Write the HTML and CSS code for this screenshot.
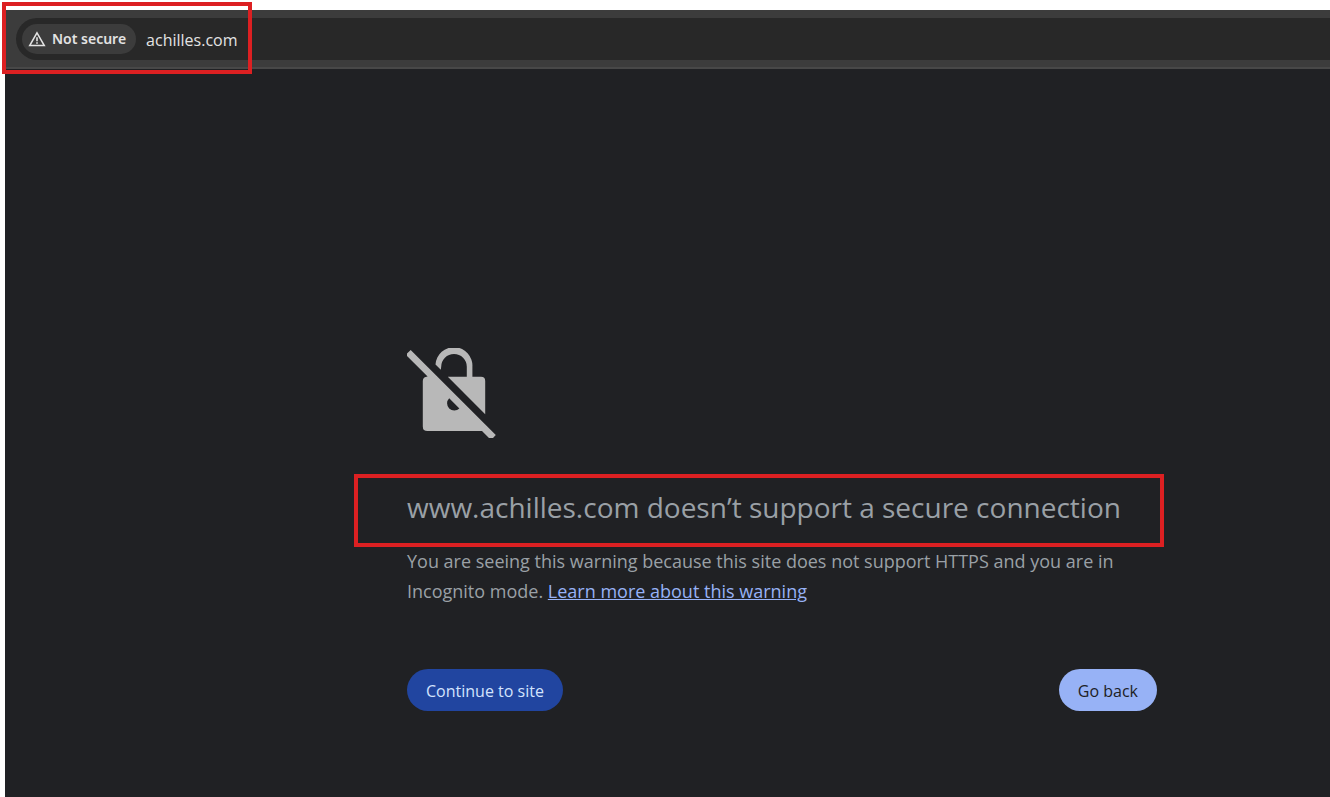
FILE: index.html
```html
<!DOCTYPE html>
<html lang="en">
<head>
<meta charset="utf-8">
<title>Not secure</title>
<link rel="stylesheet" href="styles.css">
</head>
<body>
<div class="window">
  <header class="toolbar">
    <div class="omnibox">
      <button class="chip" type="button">
        <svg class="chip-icon" viewBox="0 0 18 16" aria-hidden="true">
          <path d="M9 1.8 16.3 14.6H1.7Z" fill="none" stroke="currentColor" stroke-width="1.5"/>
          <path d="M9 6.2v4M9 11.2v1.6" stroke="currentColor" stroke-width="1.6"/>
        </svg>
        <span>Not secure</span>
      </button>
      <input class="address" type="text" aria-label="Address" value="achilles.com">
    </div>
    <div class="mark mark-address"></div>
  </header>
  <main class="page">
    <section class="warning">
      <svg class="lock" viewBox="0 0 90 90" aria-hidden="true">
        <path d="M28.5 16.5A18.4 18.4 0 0 1 65.4 18.8V28.8H74Q78.2 28.8 78.2 33V66.2L40.8 28.8H59.8V18.8A12.7 12.7 0 0 0 34.2 18.8L33.8 21.8Z"/>
        <path d="M0 5.6 3.7 2 88.8 87.1 86 90H82L75 83.1H20.5Q15.8 83.1 15.8 78.5V33Q15.8 29 20.6 28.6L0 8ZM42.2 50.2A6.9 6.9 0 1 0 52.4 60.4Z" fill-rule="evenodd"/>
      </svg>
      <div class="heading">
        <h1>www.achilles.com doesn’t support a secure connection</h1>
        <div class="mark mark-heading"></div>
      </div>
      <p>You are seeing this warning because this site does not support HTTPS and you are in Incognito mode. <a href="#">Learn more about this warning</a></p>
      <div class="actions">
        <button class="btn btn-continue" type="button">Continue to site</button>
        <button class="btn btn-back" type="button">Go back</button>
      </div>
    </section>
  </main>
</div>
</body>
</html>
```
FILE: styles.css
```css
* {
  box-sizing: border-box;
}

body {
  margin: 0;
  background: #fff;
  font-family: "Segoe UI", "Open Sans", "Noto Sans", sans-serif;
}

.window {
  display: flex;
  flex-direction: column;
  min-height: 100vh;
  padding: 10px 0 0 5px;
}

.toolbar {
  position: relative;
  padding: 8px 0 7px 11px;
  background: #3c3c3c;
  border-bottom: 2px solid #484848;
}

.omnibox {
  display: flex;
  align-items: center;
  gap: 10px;
  height: 42px;
  padding-left: 6px;
  background: #282828;
  border-radius: 21px 0 0 21px;
}

.chip {
  display: flex;
  align-items: center;
  gap: 6px;
  height: 30px;
  padding: 0 10px 0 6px;
  border: 0;
  border-radius: 15px;
  background: #3c3c3c;
  color: #e3e3e3;
  font: 600 14px/20px "Segoe UI", "Noto Sans", sans-serif;
  white-space: nowrap;
}

.chip-icon {
  width: 18px;
  height: 16px;
}

.address {
  flex: 1;
  min-width: 0;
  padding: 2px 0 0;
  border: 0;
  outline: 0;
  background: none;
  color: #e3e3e3;
  font: 16px/24px "Segoe UI", "Open Sans", sans-serif;
}

.mark {
  position: absolute;
  border: 4px solid #dc2022;
  pointer-events: none;
}

.mark-address {
  top: -8px;
  left: -3px;
  width: 250px;
  height: 72px;
}

.mark-heading {
  inset: -11px -7px -18px -53px;
}

.page {
  flex: 1;
  padding: 279px 24px 24px 402px;
  background: #202124;
  color: #9aa0a6;
}

.warning {
  max-width: 750px;
}

.lock {
  display: block;
  width: 90px;
  height: 90px;
  fill: #b8b8b8;
}

.heading {
  position: relative;
  margin-top: 47px;
}

h1 {
  margin: 0;
  font-size: 28px;
  font-weight: 400;
  line-height: 44px;
}

p {
  margin: 17px 0 0;
  font-size: 18px;
  line-height: 30px;
}

a {
  color: #97b2f6;
}

.actions {
  display: flex;
  justify-content: space-between;
  margin-top: 63px;
}

.btn {
  height: 42px;
  padding: 2px 19px 0;
  border: 0;
  border-radius: 21px;
  font: 16px/20px "Segoe UI", "Open Sans", sans-serif;
}

.btn-continue {
  background: #2145a0;
  color: #d3e3fd;
}

.btn-back {
  background: #97b2f6;
  color: #202124;
}
```
